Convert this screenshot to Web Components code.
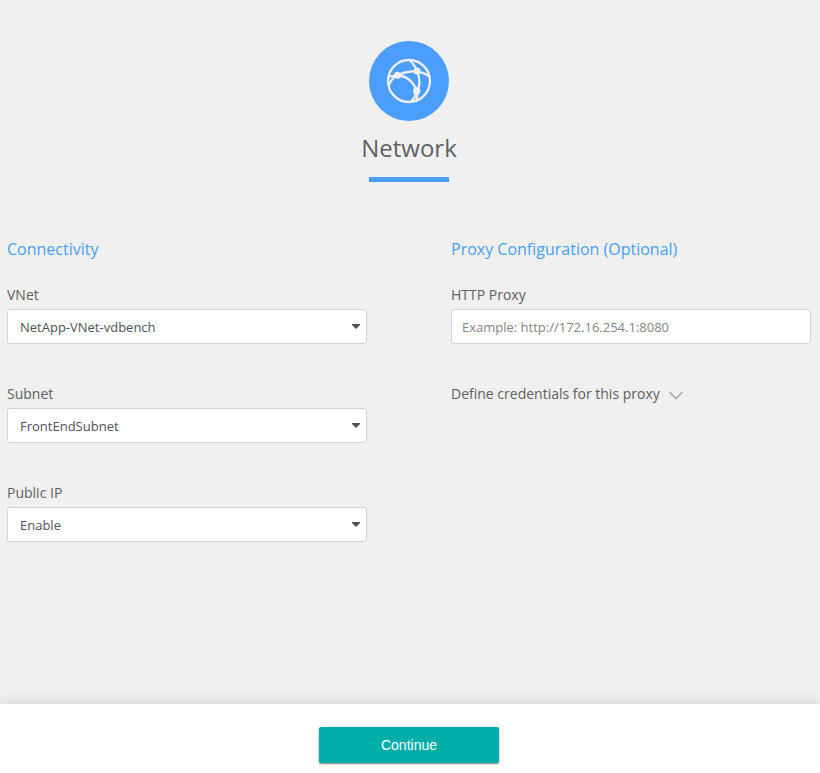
<!DOCTYPE html>
<html lang="en">
<head>
<meta charset="utf-8">
<meta name="viewport" content="width=device-width, initial-scale=1">
<title>Network</title>
<style>
  body {
    margin: 0;
    background: #f0f0f0;
    color: #5f6062;
    font: 14px/20px "Open Sans", "Noto Sans", sans-serif;
    --accent: #4b9eff;
    --action: #00aea9;
    --line: #d2d2d2;
  }
</style>
</head>
<body>
<wizard-page>
  <page-header slot="header">Network</page-header>
  <form-section heading="Connectivity">
    <select-field value="NetApp-VNet-vdbench">VNet</select-field>
    <select-field value="FrontEndSubnet">Subnet</select-field>
    <select-field value="Enable">Public IP</select-field>
  </form-section>
  <form-section heading="Proxy Configuration (Optional)">
    <text-field placeholder="Example: http://172.16.254.1:8080">HTTP Proxy</text-field>
    <expand-toggle>Define credentials for this proxy</expand-toggle>
  </form-section>
  <action-button slot="footer">Continue</action-button>
</wizard-page>

<script>
  const define = (name, render) => customElements.define(name, class extends HTMLElement {
    connectedCallback() {
      if (this.shadowRoot) return;
      const template = document.createElement('template');
      template.innerHTML = render(this);
      this.attachShadow({ mode: 'open' }).append(template.content.cloneNode(true));
    }
  });

  const fieldStyle = `
    :host { display: block; }
    label { display: block; margin-bottom: 4px; }
    select, input {
      appearance: none; display: block; box-sizing: border-box;
      width: 100%; height: 35px; margin: 0; padding: 0 12px;
      border: 1px solid var(--line); border-radius: 3px; background: #fff;
      color: #505257; font-family: inherit; font-size: 13px; line-height: 20px;
    }
    select:focus-visible, input:focus-visible { outline: 2px solid var(--accent); }`;

  define('wizard-page', () => `
    <style>
      :host { display: flex; flex-direction: column; min-height: 100vh; overflow: hidden; }
      main { flex: 1; padding: 41px 9px 40px 7px; }
      .columns { display: grid; grid-template-columns: 1fr 1fr; gap: 84px; margin-top: 55px; }
      footer {
        display: flex; justify-content: center; padding: 23px 9px 10px 7px;
        background: #fff; box-shadow: 0 0 16px rgba(0, 0, 0, .14);
      }
    </style>
    <main>
      <slot name="header"></slot>
      <div class="columns"><slot></slot></div>
    </main>
    <footer><slot name="footer"></slot></footer>`);

  define('page-header', () => `
    <style>
      :host { display: flex; flex-direction: column; align-items: center; }
      svg { display: block; width: 80px; height: 80px; }
      h1 { margin: 11px 0 13px; font-size: 24px; line-height: 32px; font-weight: 400; }
      .bar { width: 80px; height: 5px; background: var(--accent); }
    </style>
    <svg viewBox="0 0 80 80" aria-hidden="true">
      <circle cx="40" cy="40" r="40" fill="#4b9eff"/>
      <g fill="none" stroke="#f0f0f0" stroke-width="2.3" stroke-linecap="round">
        <circle cx="40" cy="40" r="21"/>
        <path d="M20.500 35.500 Q25 35 28.500 34 Q38 29.500 48 30.500 Q55 31.500 60 35"/>
        <path d="M41 19.500 Q46 24 48 30.500 Q53 41 48 50.500 Q46 57 41.500 61"/>
        <path d="M20 44 Q22.500 37.500 28.500 34 Q43 36 48 50.500 Q49 55 47 60"/>
      </g>
      <g fill="#f0f0f0">
        <circle cx="28.500" cy="34.300" r="3.500"/>
        <circle cx="48" cy="30" r="3.500"/>
        <circle cx="47.700" cy="50" r="3.700"/>
      </g>
    </svg>
    <h1><slot></slot></h1>
    <div class="bar"></div>`);

  define('form-section', el => `
    <style>
      :host { display: block; min-width: 0; }
      h2 { margin: 0 0 24px; color: var(--accent); font-size: 16px; line-height: 24px; font-weight: 400; }
      .fields { display: flex; flex-direction: column; gap: 40px; }
    </style>
    <section>
      <h2>${el.getAttribute('heading')}</h2>
      <div class="fields"><slot></slot></div>
    </section>`);

  define('select-field', el => `
    <style>${fieldStyle}
      .box { position: relative; }
      svg { position: absolute; right: 7px; top: 15px; width: 8px; height: 5px; pointer-events: none; }
    </style>
    <label for="control"><slot></slot></label>
    <div class="box">
      <select id="control"><option>${el.getAttribute('value')}</option></select>
      <svg viewBox="0 0 8 5" aria-hidden="true"><path d="M0 0H8V1L4 5L0 1Z" fill="#505257"/></svg>
    </div>`);

  define('text-field', el => `
    <style>${fieldStyle}
      input { padding: 0 10px; }
      input::placeholder { color: #858585; opacity: 1; }
    </style>
    <label for="control"><slot></slot></label>
    <input id="control" type="text" placeholder="${el.getAttribute('placeholder')}">`);

  define('expand-toggle', () => `
    <style>
      :host { display: block; }
      button {
        display: flex; align-items: center; gap: 8px; padding: 0; border: 0;
        background: none; color: inherit; font: inherit; text-align: left; cursor: pointer;
      }
      svg { width: 16px; height: 9px; margin-top: 2px; }
    </style>
    <button type="button" aria-expanded="false">
      <slot></slot>
      <svg viewBox="0 0 16 9" aria-hidden="true"><path d="M1.500 1L8 7.500L14.500 1" fill="none" stroke="#a0a0a0" stroke-width="1.300"/></svg>
    </button>`);

  define('action-button', () => `
    <style>
      :host { display: block; }
      button {
        display: block; width: 180px; height: 36px; padding: 0; border: 0; border-radius: 2px;
        background: var(--action); color: #fff; cursor: pointer;
        font: 400 14px/20px "Liberation Sans", Arial, sans-serif;
        box-shadow: 0 1px 2px rgba(0, 0, 0, .5);
      }
    </style>
    <button type="button"><slot></slot></button>`);
</script>
</body>
</html>
